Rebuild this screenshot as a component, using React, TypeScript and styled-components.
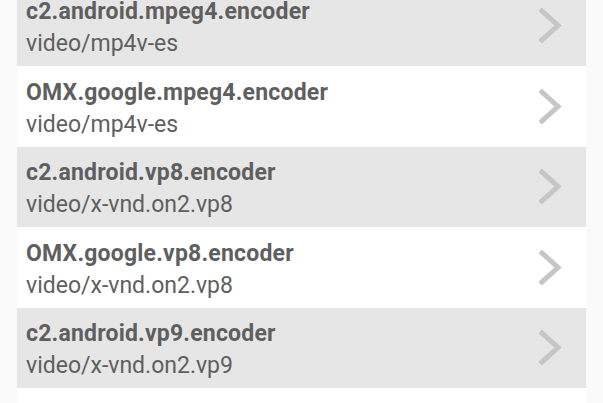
import React from 'react';
import styled, { createGlobalStyle } from 'styled-components';

type Codec = {
  name: string;
  mime: string;
};

const codecs: Codec[] = [
  { name: 'c2.android.mpeg4.encoder', mime: 'video/mp4v-es' },
  { name: 'OMX.google.mpeg4.encoder', mime: 'video/mp4v-es' },
  { name: 'c2.android.vp8.encoder', mime: 'video/x-vnd.on2.vp8' },
  { name: 'OMX.google.vp8.encoder', mime: 'video/x-vnd.on2.vp8' },
  { name: 'c2.android.vp9.encoder', mime: 'video/x-vnd.on2.vp9' },
  { name: 'OMX.google.vp9.encoder', mime: 'video/x-vnd.on2.vp9' },
];

const App: React.FC = () => {
  return (
    <>
      <GlobalStyle />
      <Page>
        <List>
          {codecs.map((codec, i) => (
            <Row key={codec.name} $shaded={i % 2 === 0}>
              <Texts>
                <Title>{codec.name}</Title>
                <Subtitle>{codec.mime}</Subtitle>
              </Texts>
              <Chevron viewBox="0 0 23 35">
                <path d="M3 3 L19 17.5 L3 32" />
              </Chevron>
            </Row>
          ))}
        </List>
      </Page>
    </>
  );
};

export default App;

const GlobalStyle = createGlobalStyle`
  html, body {
    margin: 0;
    padding: 0;
    background: #fafafa;
    overflow: hidden;
  }
  body {
    font-family: Roboto, 'Liberation Sans', sans-serif;
  }
`;

const Page = styled.div`
  height: 403px;
  padding: 0 17px;
  overflow: hidden;
  background: #fafafa;
`;

const List = styled.div`
  margin-top: -14.5px;
  display: flex;
  flex-direction: column;
`;

const Row = styled.div<{ $shaded: boolean }>`
  height: 80.5px;
  flex-shrink: 0;
  display: flex;
  align-items: center;
  justify-content: space-between;
  padding: 0 24px 0 9px;
  background: ${(p) => (p.$shaded ? '#e6e6e6' : '#ffffff')};
`;

const Texts = styled.div`
  display: flex;
  flex-direction: column;
  padding-top: 5px;
`;

const Title = styled.div`
  font-size: 23px;
  line-height: 32px;
  font-weight: 700;
  letter-spacing: 0.2px;
  color: #5f5f5f;
`;

const Subtitle = styled.div`
  font-size: 23px;
  line-height: 32px;
  font-weight: 400;
  color: #5f5f5f;
`;

const Chevron = styled.svg`
  width: 23px;
  height: 35px;
  fill: none;
  stroke: #c6c6c6;
  stroke-width: 5;
  stroke-linecap: square;
`;
